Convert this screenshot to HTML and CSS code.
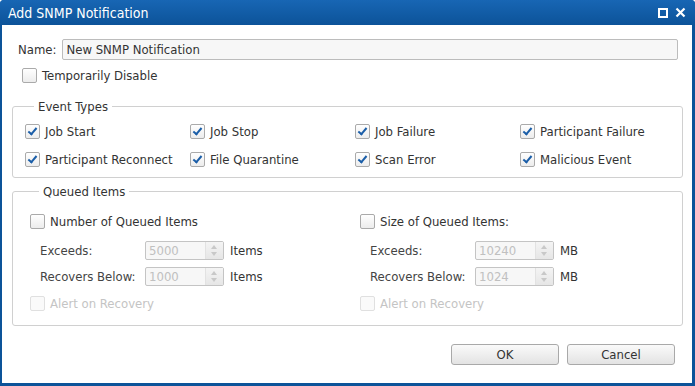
FILE: index.html
```html
<!DOCTYPE html>
<html lang="en">
<head>
  <meta charset="UTF-8" />
  <title>Add SNMP Notification</title>
  <link rel="stylesheet" href="styles.css">
</head>
<body>
  <div class="window">
    <div class="titlebar">
      <span class="title">Add SNMP Notification</span>
      <div class="title-icons">
        <svg width="10" height="10" viewBox="0 0 10 10"><rect x="1" y="1" width="8" height="8" fill="none" stroke="#fff" stroke-width="2"/></svg>
        <svg width="11" height="11" viewBox="0 0 11 11"><path d="M1.5 1.5 L9.5 9.5 M9.5 1.5 L1.5 9.5" stroke="#fff" stroke-width="2.2"/></svg>
      </div>
    </div>

    <div class="content">
      <div class="name-row">
        <label>Name:</label>
        <input type="text" class="text-input" value="New SNMP Notification" />
      </div>
      <div class="check-line disable-row">
        <span class="cb"></span>Temporarily Disable
      </div>

      <fieldset class="group">
        <legend>Event Types</legend>
        <div class="event-grid">
          <div class="check-line"><span class="cb checked"></span>Job Start</div>
          <div class="check-line"><span class="cb checked"></span>Job Stop</div>
          <div class="check-line"><span class="cb checked"></span>Job Failure</div>
          <div class="check-line"><span class="cb checked"></span>Participant Failure</div>
          <div class="check-line"><span class="cb checked"></span>Participant Reconnect</div>
          <div class="check-line"><span class="cb checked"></span>File Quarantine</div>
          <div class="check-line"><span class="cb checked"></span>Scan Error</div>
          <div class="check-line"><span class="cb checked"></span>Malicious Event</div>
        </div>
      </fieldset>

      <fieldset class="group queued">
        <legend>Queued Items</legend>
        <div class="queued-cols">
          <div class="queued-col">
            <div class="check-line head-row"><span class="cb"></span>Number of Queued Items</div>
            <div class="field-row">
              <span class="field-label">Exceeds:</span>
              <span class="spinner"><span class="spin-val">5000</span><span class="spin-btn"></span></span>
              <span class="unit">Items</span>
            </div>
            <div class="field-row">
              <span class="field-label">Recovers Below:</span>
              <span class="spinner"><span class="spin-val">1000</span><span class="spin-btn"></span></span>
              <span class="unit">Items</span>
            </div>
            <div class="check-line disabled"><span class="cb"></span>Alert on Recovery</div>
          </div>
          <div class="queued-col">
            <div class="check-line head-row"><span class="cb"></span>Size of Queued Items:</div>
            <div class="field-row">
              <span class="field-label">Exceeds:</span>
              <span class="spinner"><span class="spin-val">10240</span><span class="spin-btn"></span></span>
              <span class="unit">MB</span>
            </div>
            <div class="field-row">
              <span class="field-label">Recovers Below:</span>
              <span class="spinner"><span class="spin-val">1024</span><span class="spin-btn"></span></span>
              <span class="unit">MB</span>
            </div>
            <div class="check-line disabled"><span class="cb"></span>Alert on Recovery</div>
          </div>
        </div>
      </fieldset>

      <div class="buttons">
        <button class="btn">OK</button>
        <button class="btn">Cancel</button>
      </div>
    </div>
  </div>
</body>
</html>
```

FILE: styles.css
```css
body {
  margin: 0;
  background: #fff;
  font-family: "DejaVu Sans Condensed", "DejaVu Sans", sans-serif;
  font-size: 13px;
  color: #333;
}

.window {
  width: 695px;
  height: 386px;
  box-sizing: border-box;
  background: #0c5399;
  border-radius: 4px 4px 0 0;
  padding: 0 3px 3px 2px;
  display: flex;
  flex-direction: column;
}

.titlebar {
  height: 25px;
  display: flex;
  align-items: center;
  justify-content: space-between;
  padding: 0 9px 0 8px;
  background: linear-gradient(#1866b4, #0c5399);
  border-radius: 4px 4px 0 0;
  margin: 0 -3px 0 -2px;
}

.title {
  color: #fff;
  font-size: 14px;
}

.title-icons {
  display: flex;
  align-items: center;
  gap: 7px;
}

.content {
  flex: 1;
  background: #fff;
  padding: 14px 9px 0 10px;
}

.name-row {
  display: flex;
  align-items: center;
  padding-left: 6px;
  gap: 6px;
  margin-right: 5px;
}

.text-input {
  flex: 1;
  height: 21px;
  box-sizing: border-box;
  border: 1px solid #bcbcbc;
  border-radius: 2px;
  background: #f7f7f7;
  font: inherit;
  color: #333;
  padding: 0 3px;
}

.check-line {
  display: flex;
  align-items: center;
  gap: 5px;
  white-space: nowrap;
}

.disable-row {
  margin: 8px 0 0 10px;
}

.cb {
  width: 13px;
  height: 13px;
  border: 1px solid #aaa;
  border-radius: 2px;
  background: linear-gradient(#fff, #ececec);
  flex: none;
  position: relative;
}

.cb.checked::after {
  content: "";
  position: absolute;
  left: 4px;
  top: 1px;
  width: 3px;
  height: 7px;
  border: solid #1b5ea8;
  border-width: 0 2.5px 2.5px 0;
  transform: rotate(40deg);
}

.disabled {
  color: #c4c4c4;
}

.disabled .cb {
  border-color: #e0e0e0;
  background: #fafafa;
}

.group {
  min-width: 0;
  margin: 16px 0 0 0;
  border: 1px solid #d0d0d0;
  border-radius: 3px;
  padding: 3px 12px 4px 12px;
}

.group legend {
  padding: 0 4px;
  margin-left: 9px;
  color: #333;
}

.event-grid {
  display: grid;
  grid-template-columns: 165px 165px 165px 1fr;
  grid-auto-rows: 28px;
  align-items: center;
}

.queued {
  margin-top: 6px;
  padding: 10px 17px 10px 17px;
}

.queued-cols {
  display: flex;
}

.queued-col {
  width: 330px;
  display: flex;
  flex-direction: column;
}

.queued-col + .queued-col {
  width: auto;
  flex: 1;
}

.queued-col .check-line {
  height: 24px;
}

.head-row {
  margin-bottom: 4px;
}

.field-row {
  height: 26px;
  display: flex;
  align-items: center;
  padding-left: 10px;
}

.field-label {
  width: 105px;
  color: #444;
}

.spinner {
  width: 79px;
  height: 19px;
  box-sizing: border-box;
  border: 1px solid #c4c4c4;
  border-radius: 2px;
  background: #f7f7f7;
  display: flex;
  align-items: center;
}

.spin-val {
  flex: 1;
  padding-left: 3px;
  color: #c0c0c0;
}

.spin-btn {
  width: 17px;
  height: 100%;
  background: linear-gradient(#f4f4f4, #e6e6e6);
  border-left: 1px solid #e2e2e2;
  position: relative;
}

.spin-btn::before,
.spin-btn::after {
  content: "";
  position: absolute;
  left: 5px;
  border-left: 3.5px solid transparent;
  border-right: 3.5px solid transparent;
}

.spin-btn::before {
  top: 3px;
  border-bottom: 4px solid #c8c8c8;
}

.spin-btn::after {
  bottom: 3px;
  border-top: 4px solid #c8c8c8;
}

.unit {
  margin-left: 6px;
}

.queued-col .disabled {
  margin-top: 2px;
}

.buttons {
  display: flex;
  justify-content: flex-end;
  gap: 8px;
  margin: 18px 8px 0 0;
}

.btn {
  width: 108px;
  height: 21px;
  border: 1px solid #a9a9a9;
  border-radius: 3px;
  background: linear-gradient(#fafafa, #e3e3e3);
  font: inherit;
  color: #333;
}
```
